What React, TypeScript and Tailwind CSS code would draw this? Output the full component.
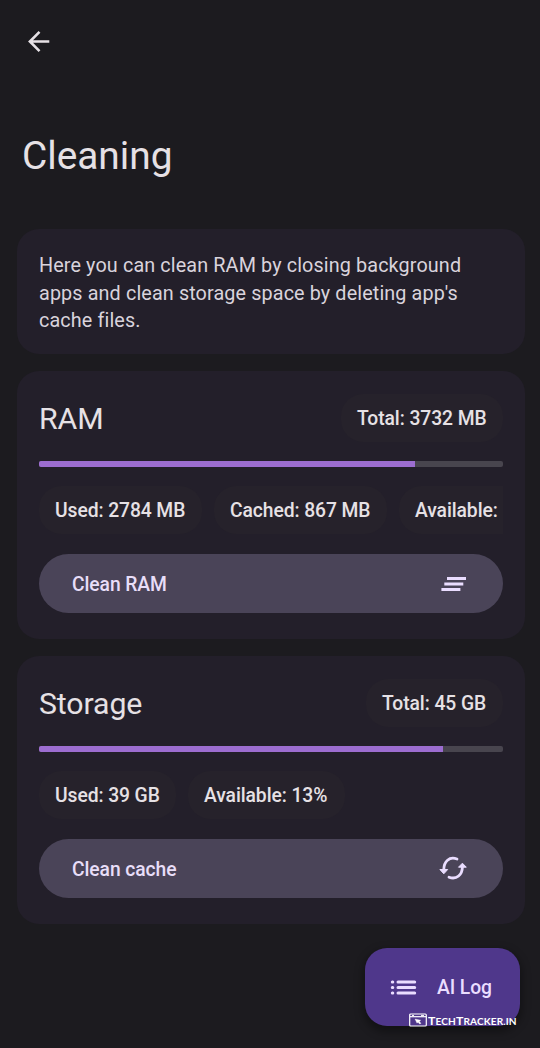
import React from "react";

function Chip({ children, className = "" }: { children: React.ReactNode; className?: string }) {
  return (
    <div
      className={`flex h-12 shrink-0 items-center rounded-[22px] bg-[#26222b] pt-[3px] pl-4 text-[19.3px] font-medium tracking-[-0.08px] whitespace-nowrap text-[#e6e1e5] ${className}`}
    >
      {children}
    </div>
  );
}

function Progress({ value }: { value: number }) {
  return (
    <div className="mt-[19px] h-1.5 overflow-hidden rounded-[2px] bg-[#48454e]">
      <div className="h-full bg-[#9c6dd0]" style={{ width: `${value}%` }} />
    </div>
  );
}

function ActionButton({ label, children }: { label: string; children: React.ReactNode }) {
  return (
    <button className="mt-5 flex h-[59px] w-full items-center justify-between rounded-full bg-[#4a4458] pr-[33px] pl-[33px] text-[19.3px] font-medium tracking-[-0.08px] text-[#e8def8]">
      <span className="pt-[3px]">{label}</span>
      {children}
    </button>
  );
}

function ClearAllIcon() {
  return (
    <svg className="h-[34px] w-[34px]" viewBox="0 0 34 34" fill="none" stroke="#eaddff" strokeWidth="2.8">
      <path d="M11 11.5H30M8.3 17H27.3M5.4 22.5H24.4" />
    </svg>
  );
}

function SyncIcon() {
  return (
    <svg className="h-[34px] w-[34px]" viewBox="0 0 34 34" fill="none">
      <path
        d="M21 7C13.2 4.2 7.9 9.5 7.8 17.5M13 25.2C20.8 28 26.3 22.5 26.4 15"
        stroke="#eaddff"
        strokeWidth="2.8"
        strokeLinecap="round"
      />
      <path d="M3.9 17.5H11.7L7.8 21.8ZM22.5 15.2H30.3L26.4 11.2Z" fill="#eaddff" stroke="#eaddff" strokeLinejoin="round" />
    </svg>
  );
}

function ResourceCard({
  title,
  total,
  totalClass,
  value,
  chips,
  action,
  icon,
}: {
  title: string;
  total: string;
  totalClass: string;
  value: number;
  chips: { text: string; width: string }[];
  action: string;
  icon: React.ReactNode;
}) {
  return (
    <section className="h-[268px] rounded-[22px] bg-[#231f2a] px-[22px] pt-[23px]">
      <div className="flex h-12 items-center justify-between">
        <h2 className="pt-0.5 text-[30.25px] leading-9 font-normal tracking-[-0.1px]">{title}</h2>
        <Chip className={totalClass}>{total}</Chip>
      </div>
      <Progress value={value} />
      <div className="mt-[19px] flex gap-3 overflow-hidden">
        {chips.map((c) => (
          <Chip key={c.text} className={c.width}>
            {c.text}
          </Chip>
        ))}
      </div>
      <ActionButton label={action}>{icon}</ActionButton>
    </section>
  );
}

export default function App() {
  return (
    <main className="relative h-[1048px] w-[540px] overflow-hidden bg-[#1c1b1f] font-['Roboto',sans-serif] text-[#e6e1e5]">
      <header className="flex h-[229px] flex-col pt-[25px] pl-[22px]">
        <svg className="h-[33px] w-[33px]" viewBox="0 0 33 33" fill="none" stroke="#e6e1e5" strokeWidth="2.6">
          <path d="M27.3 16.5H8M17.5 6.9L7.9 16.5L17.5 26.1" />
        </svg>
        <h1 className="mt-[73px] text-[38.8px] leading-[50px] font-normal">Cleaning</h1>
      </header>
      <div className="flex flex-col gap-[17px] pr-[15px] pl-[17px]">
        <section className="h-[125px] rounded-[22px] bg-[#231f2a] px-[22px] pt-[23px] text-[19.8px] leading-[27.6px] tracking-[0.12px] text-[#d9d3dc]">
          Here you can clean RAM by closing background
          <br />
          apps and clean storage space by deleting app's
          <br />
          cache files.
        </section>
        <ResourceCard
          title="RAM"
          total="Total: 3732 MB"
          totalClass="w-[162px]"
          value={81}
          chips={[
            { text: "Used: 2784 MB", width: "w-[163px]" },
            { text: "Cached: 867 MB", width: "w-[173px]" },
            { text: "Available:", width: "w-[190px]" },
          ]}
          action="Clean RAM"
          icon={<ClearAllIcon />}
        />
        <ResourceCard
          title="Storage"
          total="Total: 45 GB"
          totalClass="w-[137px]"
          value={87}
          chips={[
            { text: "Used: 39 GB", width: "w-[137px]" },
            { text: "Available: 13%", width: "w-[157px]" },
          ]}
          action="Clean cache"
          icon={<SyncIcon />}
        />
      </div>
      <button className="absolute top-[948px] left-[365px] flex h-[78px] w-[155px] items-center rounded-[22px] bg-[#4f378b] pl-[22px] text-[19.3px] font-medium tracking-[-0.08px] text-[#eaddff] shadow-[0_4px_8px_2px_rgba(0,0,0,0.35)]">
        <svg className="h-[33px] w-[33px]" viewBox="0 0 33 33" fill="none" stroke="#eaddff" strokeWidth="3" strokeLinecap="round">
          <path d="M5.3 11H5.8M11 11H27.7M5.3 16.5H5.8M11 16.5H27.7M5.3 22H5.8M11 22H27.7" />
        </svg>
        <span className="ml-[17px] pt-[3px]">AI Log</span>
      </button>
      <div className="absolute top-[1012px] left-[409px] flex h-4 items-center text-white">
        <svg className="h-[14px] w-[18px]" viewBox="0 0 18 14" fill="none" stroke="white" strokeWidth="1.2">
          <rect x=".7" y="1" width="16.6" height="12" rx="1" />
          <path d="M1 3.7H17" />
          <path d="M3 2.4H5M12 2.4H15" strokeWidth="1" />
          <path d="M6 6L11.8 7.2L10.4 8.2L12 10.4L10.6 11L9 9.2L8 10.2Z" fill="white" strokeWidth=".3" />
        </svg>
        <span className="ml-px pt-0.5 font-['Lato',sans-serif] text-[9px] leading-4 font-bold whitespace-nowrap">
          <span className="inline-block origin-left scale-x-[1.12] tracking-[0.1px] uppercase">
            <span className="text-[11px]">T</span>ech<span className="text-[11px]">T</span>racker.in
          </span>
        </span>
      </div>
    </main>
  );
}
